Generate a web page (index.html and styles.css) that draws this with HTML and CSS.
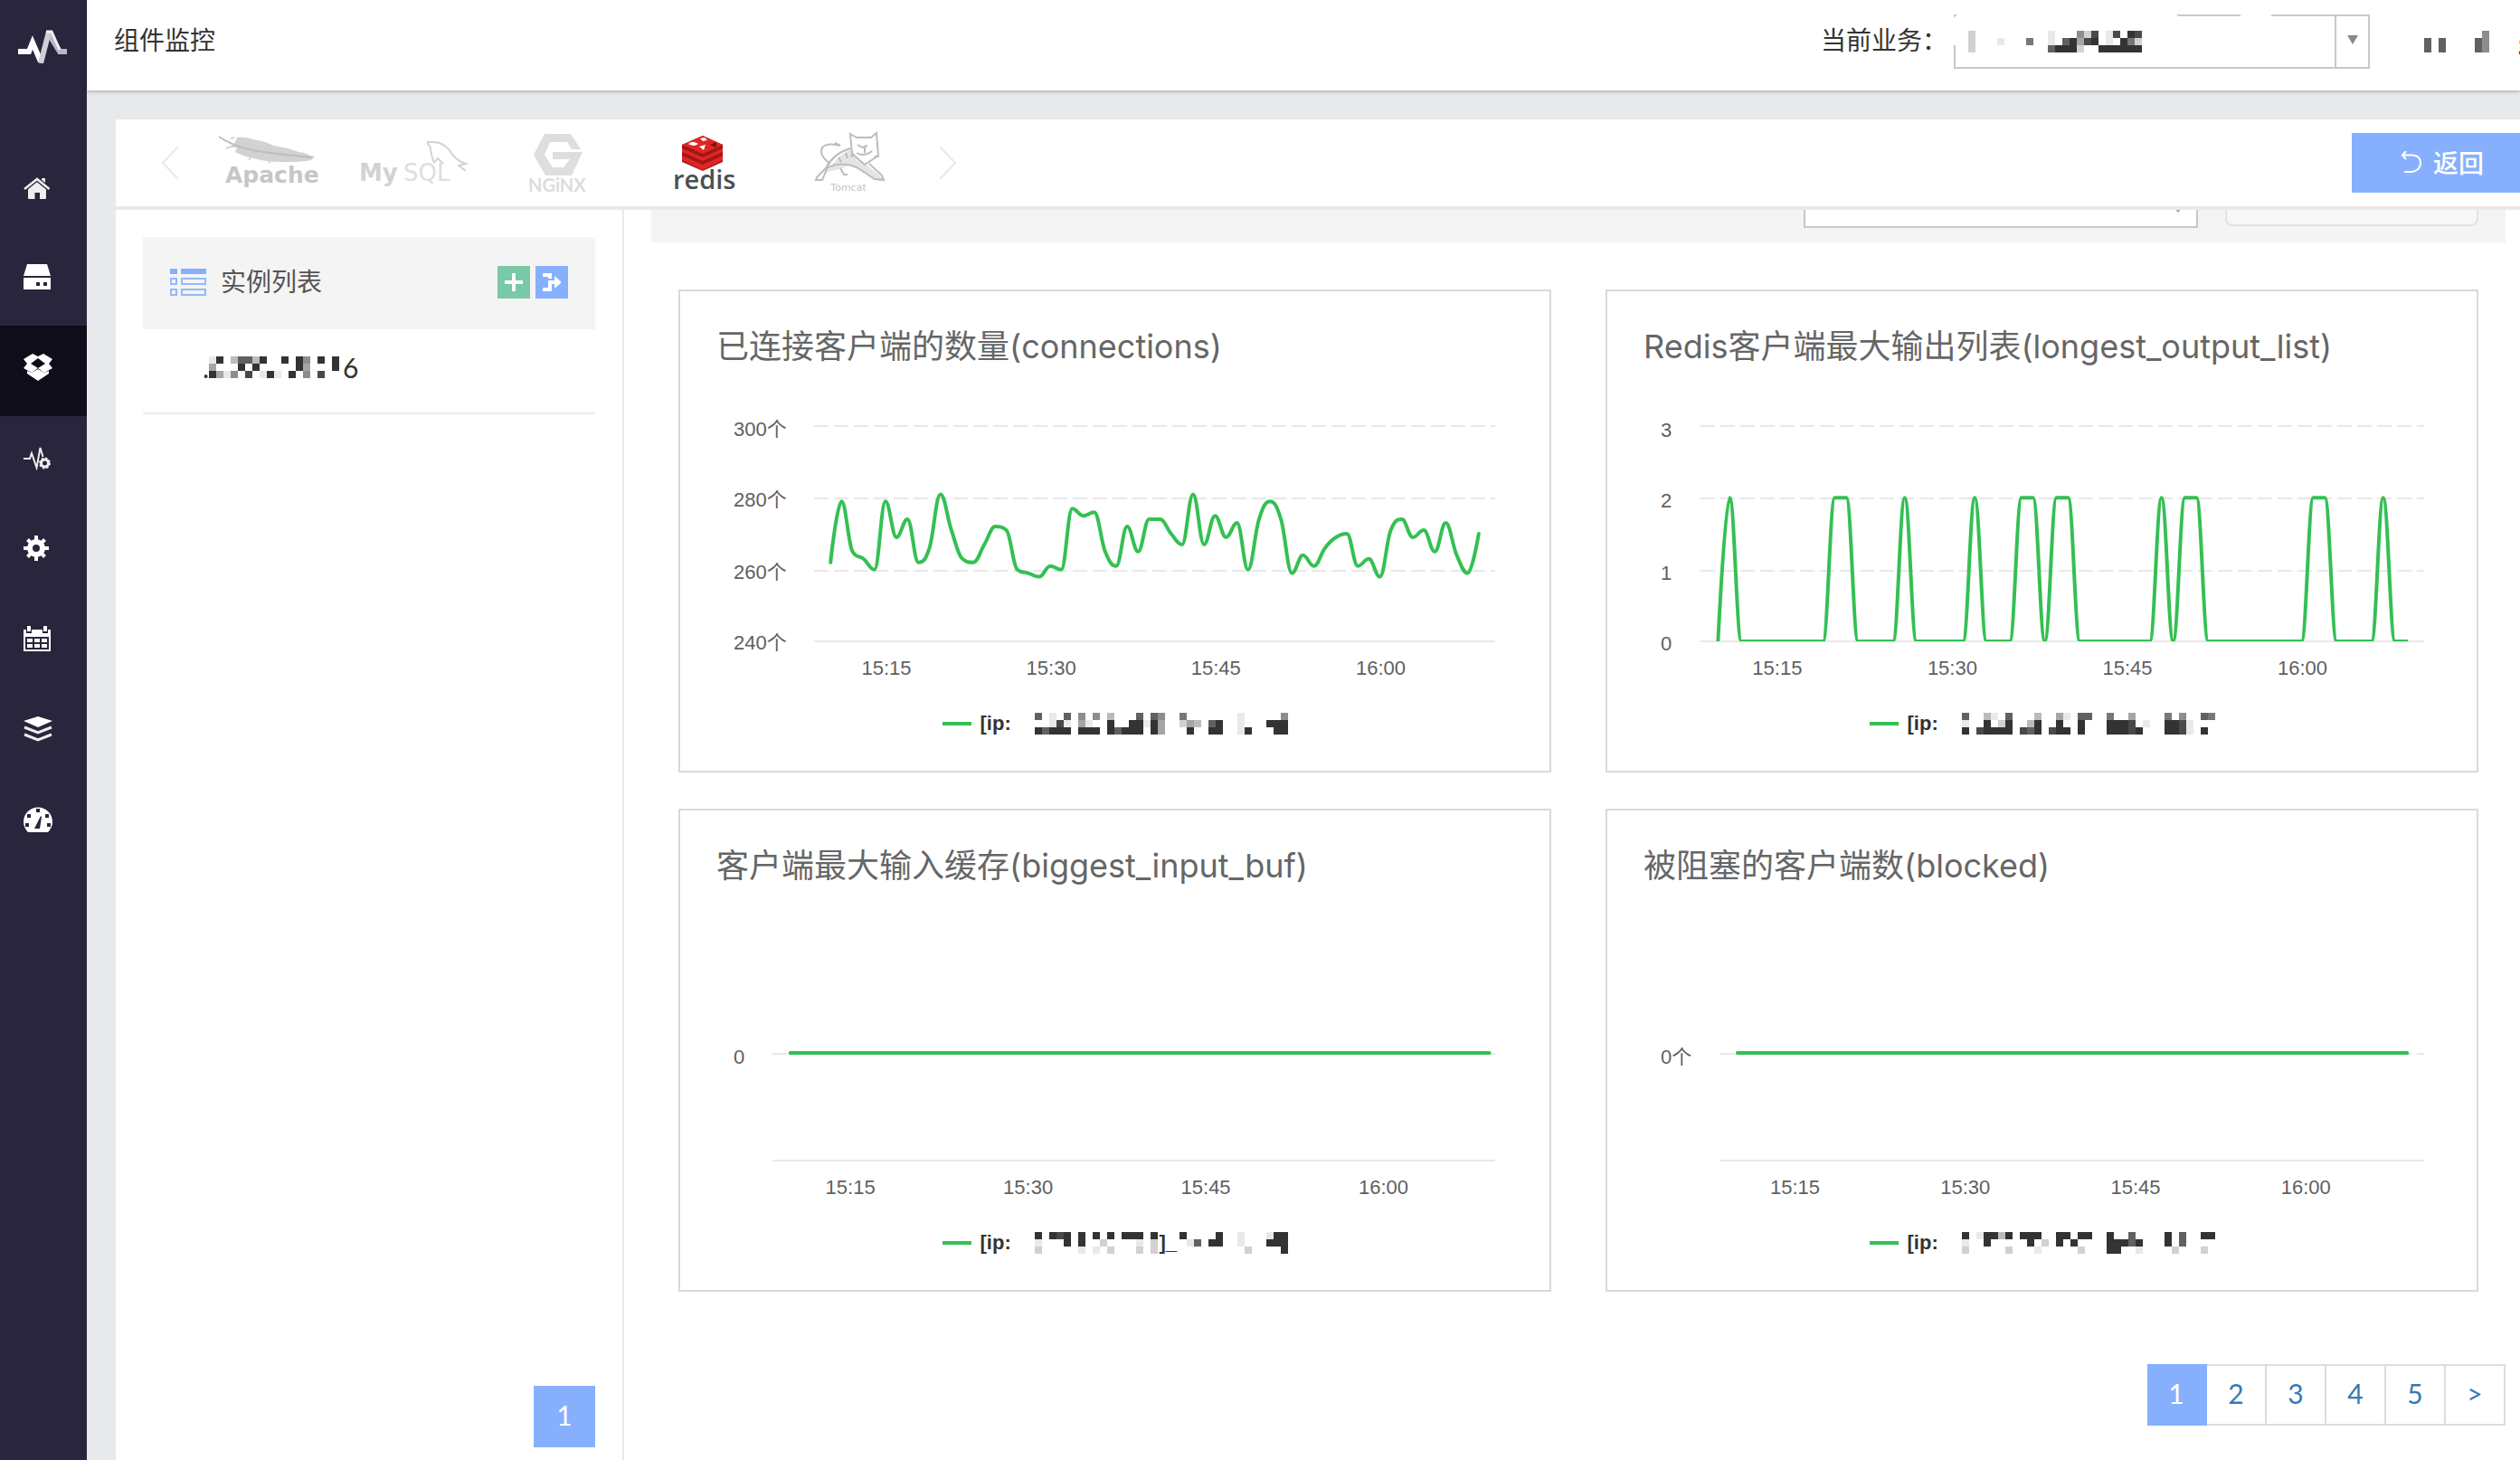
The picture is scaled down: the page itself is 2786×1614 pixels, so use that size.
FILE: index.html
```html
<!DOCTYPE html>
<html lang="zh-CN">
<head>
<meta charset="utf-8">
<title>组件监控</title>
<link rel="stylesheet" href="styles.css">
</head>
<body>
<div class="app">
  <nav class="sidebar">
    <a class="brand" href="#">
      <svg width="54" height="37" viewBox="0 0 54 37" fill="none" stroke-width="6">
        <path d="M33 3L46 24H54" stroke="#b9b7c6"/>
        <path d="M0 24H12L16 14L25 35" stroke="#fff"/>
        <path d="M25 37L34 2" stroke="#cfcdd8"/>
        <path d="M31 2H37L46 22" stroke="#f0f0f4" stroke-width="3"/>
      </svg>
    </a>
    <a class="nav-item" href="#"><svg width="32" height="28" viewBox="0 -3 32 28"><g fill="#eee"><path d="M5 14L15 5.500L25 14V24Q25 25 24 25H18V18H12.500V25H6Q5 25 5 24Z"/><path d="M20 2H24V9L20 5.500Z"/></g><path d="M1 14L15 3L28.500 14" fill="none" stroke="#28253d" stroke-width="5"/><path d="M1 14L15 3L28.500 14" fill="none" stroke="#eee" stroke-width="2.600"/></svg></a>
    <a class="nav-item" href="#"><svg width="32" height="28" viewBox="0 0 32 28"><path fill="#fff" d="M4 0H26L30 13H0ZM0 15H30V28H0ZM14 20V24H18V20ZM22 20V24H26V20Z" fill-rule="evenodd"/></svg></a>
    <a class="nav-item is-active" href="#"><svg width="32" height="30" viewBox="0 0 32 30"><path fill="#fff" d="M10 0L16 3L22 0L32 6L28 11L32 16L23 21L16 16L9 21L0 16L4 11L0 6ZM16 5L8 11L16 16L24 11Z" fill-rule="evenodd"/><path fill="#fff" d="M4 19L9 21L16 17L23 21L28 19V22L16 30L4 22Z"/></svg></a>
    <a class="nav-item" href="#"><svg width="32" height="28" viewBox="0 0 32 28"><path d="M0 15H7L9 9L14.500 25L18.500 3L21.500 13" fill="none" stroke="#eee" stroke-width="2"/><circle cx="23.500" cy="20" r="4" fill="none" stroke="#eee" stroke-width="3"/><circle cx="23.500" cy="20" r="5.500" fill="none" stroke="#eee" stroke-width="2" stroke-dasharray="2.200 2.120"/></svg></a>
    <a class="nav-item" href="#"><svg width="32" height="28" viewBox="0 0 32 28"><circle cx="14" cy="14" r="7" fill="none" stroke="#fff" stroke-width="6"/><path d="M14 0V6M14 22V28M0 14H6M22 14H28M4.500 4.500L8 8M20 20L23.500 23.500M4.500 23.500L8 20M20 8L23.500 4.500" stroke="#fff" stroke-width="4"/></svg></a>
    <a class="nav-item" href="#"><svg width="32" height="28" viewBox="0 0 32 28"><path fill="#fff" d="M0 4H3V8H9V4H21V8H27V4H30V28H0ZM2 12V26H28V12Z" fill-rule="evenodd"/><path fill="#fff" d="M4 0H8V6H4ZM22 0H26V6H22ZM4 14H10V18H4ZM12 14H18V18H12ZM20 14H26V18H20ZM4 20H10V24H4ZM12 20H18V24H12ZM20 20H26V24H20Z"/></svg></a>
    <a class="nav-item" href="#"><svg width="32" height="28" viewBox="0 0 32 28"><path fill="#fff" d="M16 0L32 5L16 12L0 5Z"/><path d="M1 12L16 18L31 12M1 20L16 26L31 20" fill="none" stroke="#eee" stroke-width="3"/></svg></a>
    <a class="nav-item" href="#"><svg width="32" height="28" viewBox="0 0 32 28"><path fill="#fff" d="M5 28A16 16 0 1 1 27 28Z"/><path fill="#28253d" d="M14 2H18V6H14ZM4 8H8V12H4ZM24 8H28V12H24ZM2 18H6V22H2ZM26 18H30V22H26ZM19 10L20 11L18 24H12Z"/></svg></a>
  </nav>

  <div class="main">
    <header class="topbar">
      <h1 class="topbar-title">组件监控</h1>
      <label class="topbar-label" for="biz">当前业务：</label>
      <div class="combo">
        <select id="biz" class="combo-select"><option></option></select>
        <svg class="mosaic combo-value" data-cells="200000000001000528018098 200010006001079489010962 200000000007999200999999"></svg>
        <span class="combo-arrow"><svg width="12" height="10" viewBox="0 0 12 10"><path d="M0 0H12L6 10Z" fill="#888"/></svg></span>
        <svg class="combo-wear" width="352" height="34" viewBox="0 0 352 34"><path fill="#fff" d="M4 0H246L250 4H6L2 8V34H0V4ZM316 0H352L348 4H320Z"/></svg>
      </div>
      <div class="user"><svg class="mosaic" data-cells="000000005 707000075 707000075"></svg><span>g</span></div>
    </header>

    <div class="tabs">
      <button class="arrow" type="button"><svg width="18" height="36" viewBox="0 0 18 36"><path d="M18 0L1 18L18 36" fill="none" stroke="#e6e9eb" stroke-width="2"/></svg></button>
      <a class="tab" href="#"><svg width="160" height="96" viewBox="0 0 160 96"><path d="M45 20Q54 19 63 22Q75 24 86 29Q100 31 113 36Q122 37 130 42Q128 46 120 46Q106 48 93 47Q78 47 63 43Q52 41 43 36L45 31L36 31L42 27Z" fill="#d2d2d2"/><path d="M25 19Q44 32 74 36T128 42" fill="none" stroke="#bdbdbd" stroke-width="2"/><path d="M42 20L38 21M38 30L33 32M60 42L58 45M82 46L80 48M128 40L130 43" stroke="#d8d8d8" stroke-width="2"/><text x="32" y="70" class="logo-apache">Apache</text></svg></a>
      <a class="tab" href="#"><svg width="160" height="96" viewBox="0 0 160 96"><text x="20" y="68" class="logo-my">My</text><text x="69" y="68" class="logo-sql">SQL</text><path d="M103 48Q99 38 99 31Q93 24 98 25Q112 24 120 34Q126 45 138 49L130 51L138 57M103 48L107 43L113 49" fill="none" stroke="#d2d2d2" stroke-width="2"/></svg></a>
      <a class="tab" href="#"><svg width="160" height="96" viewBox="0 0 160 96"><path d="M65 16H94L105 33H95L90 25H71L65 39L74 53H86L93 44H74V36H107L95 62H66L53 39Z" fill="#dedede"/><text x="47" y="80" class="logo-nginx">NGiNX</text></svg></a>
      <a class="tab" href="#"><svg width="160" height="96" viewBox="0 0 160 96"><path d="M57 28L80 18L102 28V47L80 57L57 47Z" fill="#a51515"/><path d="M57 28L80 18L102 28L80 38ZM57 32L80 42L102 32V36L80 46L57 36ZM57 40L80 50L102 40V45L80 56L57 45Z" fill="#de2626"/><path d="M64 27Q69 23 75 27Q70 31 64 27ZM77 21L82 20L85 23L80 24ZM76 30L83 28L81 34Z" fill="#fff"/><path d="M88 28L95 25L95 31Z" fill="#7c1010"/><text x="47" y="77" class="logo-redis">redis</text></svg></a>
      <a class="tab" href="#"><svg width="160" height="96" viewBox="0 0 160 96"><g transform="translate(-18 0)"><path d="M75 58Q88 38 103 33L108 45L120 51L138 66L128 66L108 52Q98 50 92 54Z" fill="#e4e4e4"/><g fill="none" stroke="#bcbcbc" stroke-width="2"><path d="M101 16L108 20H124L130 15L132 40L117 50L103 38ZM101 32Q82 38 74 54L64 64L63 67H70L76 53Q92 46 108 53L128 66L138 67L136 62L122 49M79 49Q66 40 70 31Q76 25 90 29L84 26"/><path d="M90 54L94 61H98M108 37Q116 42 125 35M109 28L114 31L120 29M117 31V37M96 37L98 43M88 42L91 47M128 41H133M101 41L106 39"/></g></g><text x="81" y="79" class="logo-tomcat">Tomcat</text></svg></a>
      <button class="arrow" type="button"><svg width="18" height="36" viewBox="0 0 18 36"><path d="M0 0L17 18L0 36" fill="none" stroke="#e6e9eb" stroke-width="2"/></svg></button>
      <button class="back" type="button"><svg width="24" height="24" viewBox="0 0 24 24"><path d="M6 0L2 4.500L6 9M2 4.500H13Q22 5 22 13T13 23H4" fill="none" stroke="#fff" stroke-width="2"/></svg>返回</button>
    </div>

    <div class="body">
      <aside class="instances">
        <div class="inst-head">
          <svg width="40" height="30" viewBox="0 0 40 30"><path fill="#86b0fe" d="M0 0H8V6H0ZM12 0H40V6H12Z"/><path d="M1 11H7V17H1ZM13 11H39V17H13ZM1 23H7V29H1ZM13 23H39V29H13Z" fill="none" stroke="#94b9fe" stroke-width="2"/></svg>
          <h2 class="inst-title">实例列表</h2>
          <button class="sq sq-add" type="button"><svg width="20" height="20" viewBox="0 0 20 20"><path d="M10 0V20M0 10H20" stroke="#fff" stroke-width="4"/></svg></button>
          <button class="sq" type="button"><svg width="20" height="20" viewBox="0 0 20 20"><path d="M0 2H8V6M0 18H8V10H15" fill="none" stroke="#fff" stroke-width="4"/><path d="M13 3L21 10L13 17Z" fill="#fff"/></svg></button>
        </div>
        <a class="inst-row" href="#"><span>.</span><svg class="mosaic" data-cells="190377390090950909 400090900000940009 941508019109050800"></svg><span>6</span></a>
        <button class="inst-page" type="button">1</button>
      </aside>

      <main class="content">
        <form class="filters">
          <div class="search"><input class="search-input" type="search" aria-label="search"><svg width="26" height="30" viewBox="0 0 26 30" fill="none" stroke="#aaa" stroke-width="2"><circle cx="11" cy="12" r="10"/><path d="M18 20L25 29" stroke-width="3"/></svg></div>
          <select class="range" aria-label="range"><option></option></select>
        </form>

        <div class="cards">
          <section class="card">
            <h2 class="card-title">已连接客户端的数量(connections)</h2>
            <svg class="chart" data-chart="connections"></svg>
            <div class="legend"><i class="swatch"></i><b class="legend-name">[ip:</b><div class="legend-mask"><svg class="mosaic" data-cells="70107050503000707500600000001000005 00181041009009919400243079001000999 97999099909799909400090099001900099"></svg></div></div>
          </section>
          <section class="card">
            <h2 class="card-title">Redis客户端最大输出列表(longest_output_list)</h2>
            <svg class="chart" data-chart="output"></svg>
            <div class="legend"><i class="swatch"></i><b class="legend-name">[ip:</b><div class="legend-mask"><svg class="mosaic" data-cells="70031070003004107700600400006050076 10090290039009009000999801009981000 90899990879089909000999890009981090"></svg></div></div>
          </section>
          <section class="card">
            <h2 class="card-title">客户端最大输入缓存(biggest_input_buf)</h2>
            <svg class="chart" data-chart="input"></svg>
            <div class="legend"><i class="swatch"></i><b class="legend-name">[ip:</b><div class="legend-mask"><svg class="mosaic" data-cells="90989090909099909000900009001000199 10009090020000102000017099001000999 20000010102000202000000000000200009"></svg><b class="legend-over">]_</b></div></div>
          </section>
          <section class="card">
            <h2 class="card-title">被阻塞的客户端数(blocked)</h2>
            <svg class="chart" data-chart="blocked"></svg>
            <div class="legend"><i class="swatch"></i><b class="legend-name">[ip:</b><div class="legend-mask"><svg class="mosaic" data-cells="90199390999009909900900700009070099 10090000090209090000999790009070000 20000020001000002000990010000200020"></svg></div></div>
          </section>
        </div>

        <div class="pager">
          <button class="page is-current" type="button">1</button><button class="page" type="button">2</button><button class="page" type="button">3</button><button class="page" type="button">4</button><button class="page" type="button">5</button><button class="page" type="button">&gt;</button>
        </div>
      </main>
    </div>
  </div>
</div>
<script src="charts.js"></script>
</body>
</html>
```
FILE: styles.css
```css
* { box-sizing: border-box; }
body { margin: 0; font-family: "Lato", "Noto Sans CJK SC", sans-serif; font-size: 28px; color: #333; background: #e7e9eb; }
h1, h2 { margin: 0; font-weight: 400; }
a { color: inherit; text-decoration: none; }
button, input, select { font: inherit; margin: 0; padding: 0; border: 0; border-radius: 0; color: inherit; }
svg { display: block; flex: none; }

.app { display: flex; height: 100vh; overflow: hidden; }
.sidebar { flex: none; width: 96px; background: #28253d; }
.brand { display: block; height: 160px; padding: 33px 20px 0; }
.nav-item { display: flex; align-items: center; height: 100px; padding: 0 0 8px 26px; }
.nav-item.is-active { background: #0e0d19; }
.main { flex: 1; min-width: 0; display: flex; flex-direction: column; }

.topbar { position: relative; display: flex; align-items: center; flex: none; height: 100px; padding: 0 0 8px 30px; background: #fff; box-shadow: 0 1px 4px rgba(0, 0, 0, .3); }
.topbar-title { flex: 1; padding-bottom: 4px; font-size: 28px; line-height: 40px; }
.topbar-label { width: 147px; padding-bottom: 4px; line-height: 40px; white-space: nowrap; }
.combo { position: relative; width: 460px; height: 60px; display: flex; border: 2px solid #c8c8c8; }
.combo-select { flex: 1; appearance: none; background: #fff; outline: 0; }
.combo-arrow { display: flex; align-items: center; justify-content: center; width: 37px; padding-bottom: 4px; border-left: 2px solid #c8c8c8; background: #fff; }
.combo-value { position: absolute; left: 14px; top: 16px; }
.combo-wear { position: absolute; left: -2px; top: -2px; }
.user { display: flex; align-items: center; width: 166px; padding-left: 60px; overflow: hidden; line-height: 40px; }
.user span { padding-left: 32px; }

.tabs { display: flex; align-items: center; flex: none; height: 100px; margin: 32px 0 0 32px; padding-left: 51px; background: #fff; border-bottom: 4px solid #e9e9e9; }
.arrow { background: none; }
.arrow + .tab { margin-left: 20px; }
.tab + .arrow { margin-left: 22px; }
.tab { flex: none; }
.logo-apache { font: bold 25px "DejaVu Sans", sans-serif; fill: #c6c6c6; }
.logo-my { font: bold 26px "DejaVu Sans", sans-serif; fill: #d2d2d2; }
.logo-sql { font: 26px "DejaVu Sans", sans-serif; fill: #dedede; }
.logo-nginx { font: bold 20px "Lato", sans-serif; fill: #dcdcdc; }
.logo-redis { font: 600 29px "Open Sans", sans-serif; fill: #4a4f54; }
.logo-tomcat { font: 11px "DejaVu Sans", sans-serif; fill: #c4c4c4; text-anchor: middle; }
.back { display: flex; align-items: center; gap: 12px; width: 186px; height: 66px; margin-left: auto; padding: 0 0 2px 54px; background: #86b0fe; color: #fff; font-weight: 500; }

.body { flex: 1; min-height: 0; display: flex; margin-left: 32px; background: #fff; }
.instances { flex: none; display: flex; flex-direction: column; width: 562px; padding: 30px 30px 14px; border-right: 2px solid #e9e9e9; }
.inst-head { display: flex; align-items: center; gap: 6px; height: 102px; padding: 0 30px 2px; background: #f4f4f4; }
.inst-title { flex: 1; padding: 0 0 2px 10px; font-size: 28px; line-height: 40px; color: #555; }
.sq { display: flex; align-items: center; justify-content: center; width: 36px; height: 36px; background: #86b0fe; }
.sq-add { background: #79c9a8; }
.inst-row { display: flex; align-items: center; height: 94px; padding: 0 0 8px 66px; border-bottom: 2px solid #ebebeb; font-size: 30px; line-height: 40px; }
.inst-row span:last-child { padding-left: 4px; }
.inst-page { width: 68px; height: 68px; margin: auto 0 0 auto; padding-bottom: 4px; background: #86b0fe; color: #fff; font-size: 30px; }

.content { flex: 1; min-width: 0; padding: 0 16px 0 30px; overflow: hidden; }
.filters { display: flex; align-items: center; justify-content: flex-end; gap: 30px; height: 104px; margin-top: -68px; padding: 24px 30px 16px; background: #f4f4f4; }
.search { display: flex; align-items: center; width: 436px; height: 64px; padding-right: 18px; border: 2px solid #c8c8c8; background: #fff; }
.search-input { flex: 1; height: 56px; background: none; outline: 0; }
.range { width: 280px; height: 60px; appearance: none; border: 2px solid #e2e2e2; border-radius: 8px; background: #f7f7f7; }

.cards { display: grid; grid-template-columns: 1fr 1fr; gap: 40px 60px; margin-top: 52px; padding: 0 30px; }
.card { min-width: 0; padding: 36px 0 32px; border: 2px solid #d9d9d9; }
.card-title { padding: 0 40px 2px; font: 36px/50px "Inter", "Noto Sans CJK SC", sans-serif; color: #666; white-space: nowrap; }
.chart { width: 100%; height: 370px; font: 22px "Liberation Sans", "Noto Sans CJK SC", sans-serif; fill: #606060; }
.legend { display: flex; align-items: center; justify-content: center; height: 40px; font: 22px/40px "Liberation Sans", sans-serif; }
.swatch { width: 32px; height: 4px; margin-right: 10px; background: #34c053; }
.legend-name { width: 60px; }
.legend-mask { position: relative; }
.legend-over { position: absolute; left: 138px; top: -8px; }

.pager { display: flex; justify-content: flex-end; margin-top: 80px; }
.page { width: 66px; height: 68px; padding-bottom: 4px; border: 2px solid #ddd; border-left: 0; background: #fff; color: #337ab7; font-size: 30px; }
.page.is-current { border-color: #86b0fe; background: #86b0fe; color: #fff; }
```
FILE: charts.js
```js
(function () {
  var GREEN = '#34c053';

  function fill(n, value) {
    var list = [];
    for (var i = 0; i < n; i++) list.push(value);
    return list;
  }

  var output = fill(60, 0);
  [1, 10, 11, 16, 22, 26, 27, 29, 30, 38, 40, 41, 51, 52, 57].forEach(function (i) { output[i] = 2; });

  // grid rows: [y, label]; plot spans left..(width - right)
  var charts = {
    connections: {
      left: 148, right: 60, tail: 1.5, min: 240, max: 300, labelDrop: 11,
      rows: [[61, '300个'], [141, '280个'], [221, '260个'], [299, '240个']],
      data: [262, 279, 265, 263, 260, 279, 269, 274, 262, 266, 281, 271, 263, 262, 267, 272, 271, 260, 259, 258,
        261, 260, 277, 275, 276, 265, 261, 272, 265, 274, 274, 270, 267, 281, 267, 275, 269, 273, 260, 274,
        279, 274, 259, 264, 261, 266, 269, 270, 261, 263, 258, 271, 274, 269, 271, 265, 273, 264, 259, 270]
    },
    output: {
      left: 103, right: 58, tail: 1.5, min: 0, max: 3, labelDrop: 12,
      rows: [[61, '3'], [141, '2'], [221, '1'], [299, '0']], data: output
    },
    input: { left: 102, right: 60, tail: 0.5, flat: 180, labelDrop: 11, rows: [[181, '0'], [299, '']], data: fill(60, 0) },
    blocked: { left: 125, right: 58, tail: 1.5, flat: 180, labelDrop: 11, rows: [[181, '0个'], [299, '']], data: fill(60, 0) }
  };

  // spline whose control points never overshoot a local extremum
  function spline(p) {
    var d = 'M' + p[0][0] + ' ' + p[0][1];
    var prev = p[0];
    for (var i = 1; i < p.length; i++) {
      var a = p[i - 1], b = p[i], c = p[i + 1];
      var lx = b[0], ly = b[1], rx = b[0], ry = b[1];
      if (c) {
        lx = (1.5 * b[0] + a[0]) / 2.5; ly = (1.5 * b[1] + a[1]) / 2.5;
        rx = (1.5 * b[0] + c[0]) / 2.5; ry = (1.5 * b[1] + c[1]) / 2.5;
        var fix = (ry - ly) * (rx - b[0]) / (rx - lx) + b[1] - ry;
        ly += fix; ry += fix;
        if (ly > a[1] && ly > b[1]) { ly = Math.max(a[1], b[1]); ry = 2 * b[1] - ly; }
        else if (ly < a[1] && ly < b[1]) { ly = Math.min(a[1], b[1]); ry = 2 * b[1] - ly; }
        if (ry > c[1] && ry > b[1]) { ry = Math.max(c[1], b[1]); ly = 2 * b[1] - ry; }
        else if (ry < c[1] && ry < b[1]) { ry = Math.min(c[1], b[1]); ly = 2 * b[1] - ry; }
      }
      d += 'C' + [prev[0], prev[1], lx, ly, b[0], b[1]].map(function (n) { return n.toFixed(1); }).join(' ');
      prev = [rx, ry];
    }
    return d;
  }

  function draw(svg) {
    var c = charts[svg.dataset.chart];
    var x1 = c.left, x2 = svg.getBoundingClientRect().width - c.right;
    var step = (x2 - x1) / (59 + 1.5 + c.tail);
    var start = x1 + 1.5 * step;
    var id = 'clip-' + svg.dataset.chart;
    var html = '<clipPath id="' + id + '"><rect x="' + x1 + '" y="40" width="' + (x2 - x1) + '" height="259"/></clipPath>';
    c.rows.forEach(function (row, i) {
      var dash = i < c.rows.length - 1 ? ' stroke-dasharray="16 6"' : '';
      html += '<path d="M' + x1 + ' ' + row[0] + 'H' + x2 + '" stroke="#e8e8e8" stroke-width="2"' + dash + '/>';
      html += '<text x="59" y="' + (row[0] + c.labelDrop - (c.max && i ? 2 : 0)) + '">' + row[1] + '</text>';
    });
    ['15:15', '15:30', '15:45', '16:00'].forEach(function (t, i) {
      html += '<text text-anchor="middle" x="' + (start + (5 + 15 * i) * step + 1) + '" y="336">' + t + '</text>';
    });
    var points = c.data.map(function (v, i) {
      return [start + i * step, c.flat || 299 - (v - c.min) * 238 / (c.max - c.min)];
    });
    html += '<path clip-path="url(#' + id + ')" d="' + spline(points) + '" fill="none" stroke="' + GREEN + '" stroke-width="4" stroke-linecap="round" stroke-linejoin="round"/>';
    svg.innerHTML = html;
  }

  // 8px grey blocks, 0 = blank, 9 = darkest
  document.querySelectorAll('.mosaic').forEach(function (svg) {
    var rows = svg.dataset.cells.split(' ');
    var html = '';
    rows.forEach(function (row, y) {
      row.split('').forEach(function (n, x) {
        if (n === '0') return;
        html += '<rect x="' + x * 8 + '" y="' + y * 8 + '" width="8" height="8" fill="#333" fill-opacity="' + n / 9 + '"/>';
      });
    });
    svg.setAttribute('width', rows[0].length * 8);
    svg.setAttribute('height', rows.length * 8);
    svg.innerHTML = html;
  });

  function drawAll() { document.querySelectorAll('.chart').forEach(draw); }
  window.addEventListener('resize', drawAll);
  drawAll();
})();
```
